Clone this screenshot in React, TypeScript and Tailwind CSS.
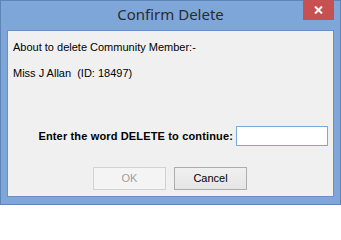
export default function App() {
  return (
    <div className="box-border flex h-[205px] min-h-[205px] w-[341px] flex-col border border-[#5f84b8] bg-[#7fa6d8] font-['Liberation_Sans',Arial,sans-serif] text-[11px] text-black">
      {/* title bar */}
      <div className="grid h-[29px] shrink-0 grid-cols-[1fr_auto_1fr]">
        <div />
        <div className="pt-[3px] font-['Noto_Sans',sans-serif] text-[15px] leading-[20px] text-[#2b2b2b]">
          Confirm Delete
        </div>
        <div className="flex justify-end pr-[6px]">
          <div className="-mt-px flex h-[20px] w-[31px] items-center justify-center bg-[#c75050]">
            <svg width="9" height="8" viewBox="0 0 9 8">
              <path d="M1 0.5 L8 7.5 M8 0.5 L1 7.5" stroke="#fff" strokeWidth="2" />
            </svg>
          </div>
        </div>
      </div>

      {/* client area */}
      <div className="mx-[6px] mb-[7px] flex flex-1 flex-col border border-[#6a8fc4] bg-[#f0f0f0] px-[5px]">
        <div className="mt-[10px] leading-[13px]">About to delete Community Member:-</div>
        <div className="mt-[13px] whitespace-pre leading-[13px]">Miss J Allan  (ID: 18497)</div>

        <div className="mt-[46px] flex items-center justify-end gap-[3px]">
          <span className="font-bold leading-[13px] tracking-[0.15px]">Enter the word DELETE to continue:</span>
          <input
            className="h-[20px] w-[92px] border border-[#7aa7dc] bg-white px-1 text-[11px] outline-none"
            readOnly
          />
        </div>

        <div className="mt-[21px] flex justify-center gap-[8px]">
          <button className="ml-[-1px] h-[23px] w-[73px] border border-[#d2d2d2] bg-[#f4f4f4] text-[11px] text-[#a0a0a0]">
            OK
          </button>
          <button className="h-[23px] w-[73px] border border-[#adadad] bg-linear-to-b from-[#f0f0f0] to-[#e5e5e5] text-[11px] text-black">
            Cancel
          </button>
        </div>
      </div>
    </div>
  )
}
